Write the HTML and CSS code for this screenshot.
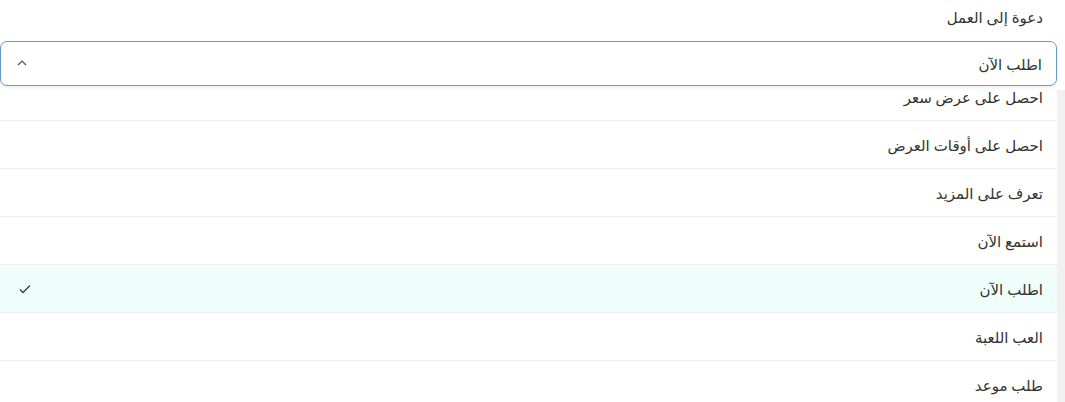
FILE: index.html
```html
<!DOCTYPE html>
<html lang="ar" dir="rtl">
<head>
<meta charset="utf-8">
<link rel="stylesheet" href="styles.css">
</head>
<body>
<div class="field">
  <label class="label">دعوة إلى العمل</label>
  <div class="select">
    <span class="value">اطلب الآن</span>
    <svg class="chevron" width="10" height="6" viewBox="0 0 10 6"><path d="M1 5 L5 1 L9 5" fill="none" stroke="#555" stroke-width="1.2"/></svg>
  </div>
  <div class="dropdown">
    <div class="track"></div>
    <ul class="options">
      <li class="option">احصل على عرض سعر</li>
      <li class="option">احصل على أوقات العرض</li>
      <li class="option">تعرف على المزيد</li>
      <li class="option">استمع الآن</li>
      <li class="option selected"><span>اطلب الآن</span><svg class="check" width="12" height="10" viewBox="0 0 12 10"><path d="M1 5.5 L4 8.5 L11 1.5" fill="none" stroke="#24425f" stroke-width="1.3"/></svg></li>
      <li class="option">العب اللعبة</li>
      <li class="option">طلب موعد</li>
    </ul>
  </div>
</div>
</body>
</html>
```

FILE: styles.css
```css
html, body {
  margin: 0;
  padding: 0;
  background: #ffffff;
}
body {
  font-family: "Noto Sans", "DejaVu Sans", sans-serif;
  color: #333333;
  font-size: 14px;
  width: 1065px;
  height: 402px;
  overflow: hidden;
}
.field {
  display: flex;
  flex-direction: column;
}
.label {
  display: block;
  padding: 6px 22px 0 0;
  height: 41px;
  box-sizing: border-box;
  line-height: 22px;
  font-size: 15px;
  color: #333;
}
.select {
  margin-right: 8px;
  margin-left: 0;
  height: 45px;
  box-sizing: border-box;
  border: 1px solid #5b98e6;
  border-radius: 7px;
  padding: 0 14px 0 16px;
  display: flex;
  align-items: center;
  justify-content: space-between;
  box-shadow: 0 2px 4px rgba(0,0,0,0.06);
  background: #fff;
  position: relative;
  z-index: 1;
}
.value {
  font-size: 15px;
  color: #333;
}
.chevron {
  display: block;
  margin-top: -2px;
}
.dropdown {
  display: flex;
  height: 316px;
  overflow: hidden;
}
.track {
  width: 8px;
  flex: none;
  margin-top: 4px;
  background: #f1f1f1;
}
.options {
  list-style: none;
  margin: -13px 0 0 0;
  padding: 0;
  width: 1057px;
  flex: none;
}
.option {
  height: 48px;
  box-sizing: border-box;
  border-bottom: 1px solid #eeeeee;
  display: flex;
  align-items: center;
  justify-content: space-between;
  padding: 0 14px 0 19px;
  font-size: 15px;
  color: #333;
}
.option.selected {
  background: #effefb;
}
.check {
  display: block;
}
```
